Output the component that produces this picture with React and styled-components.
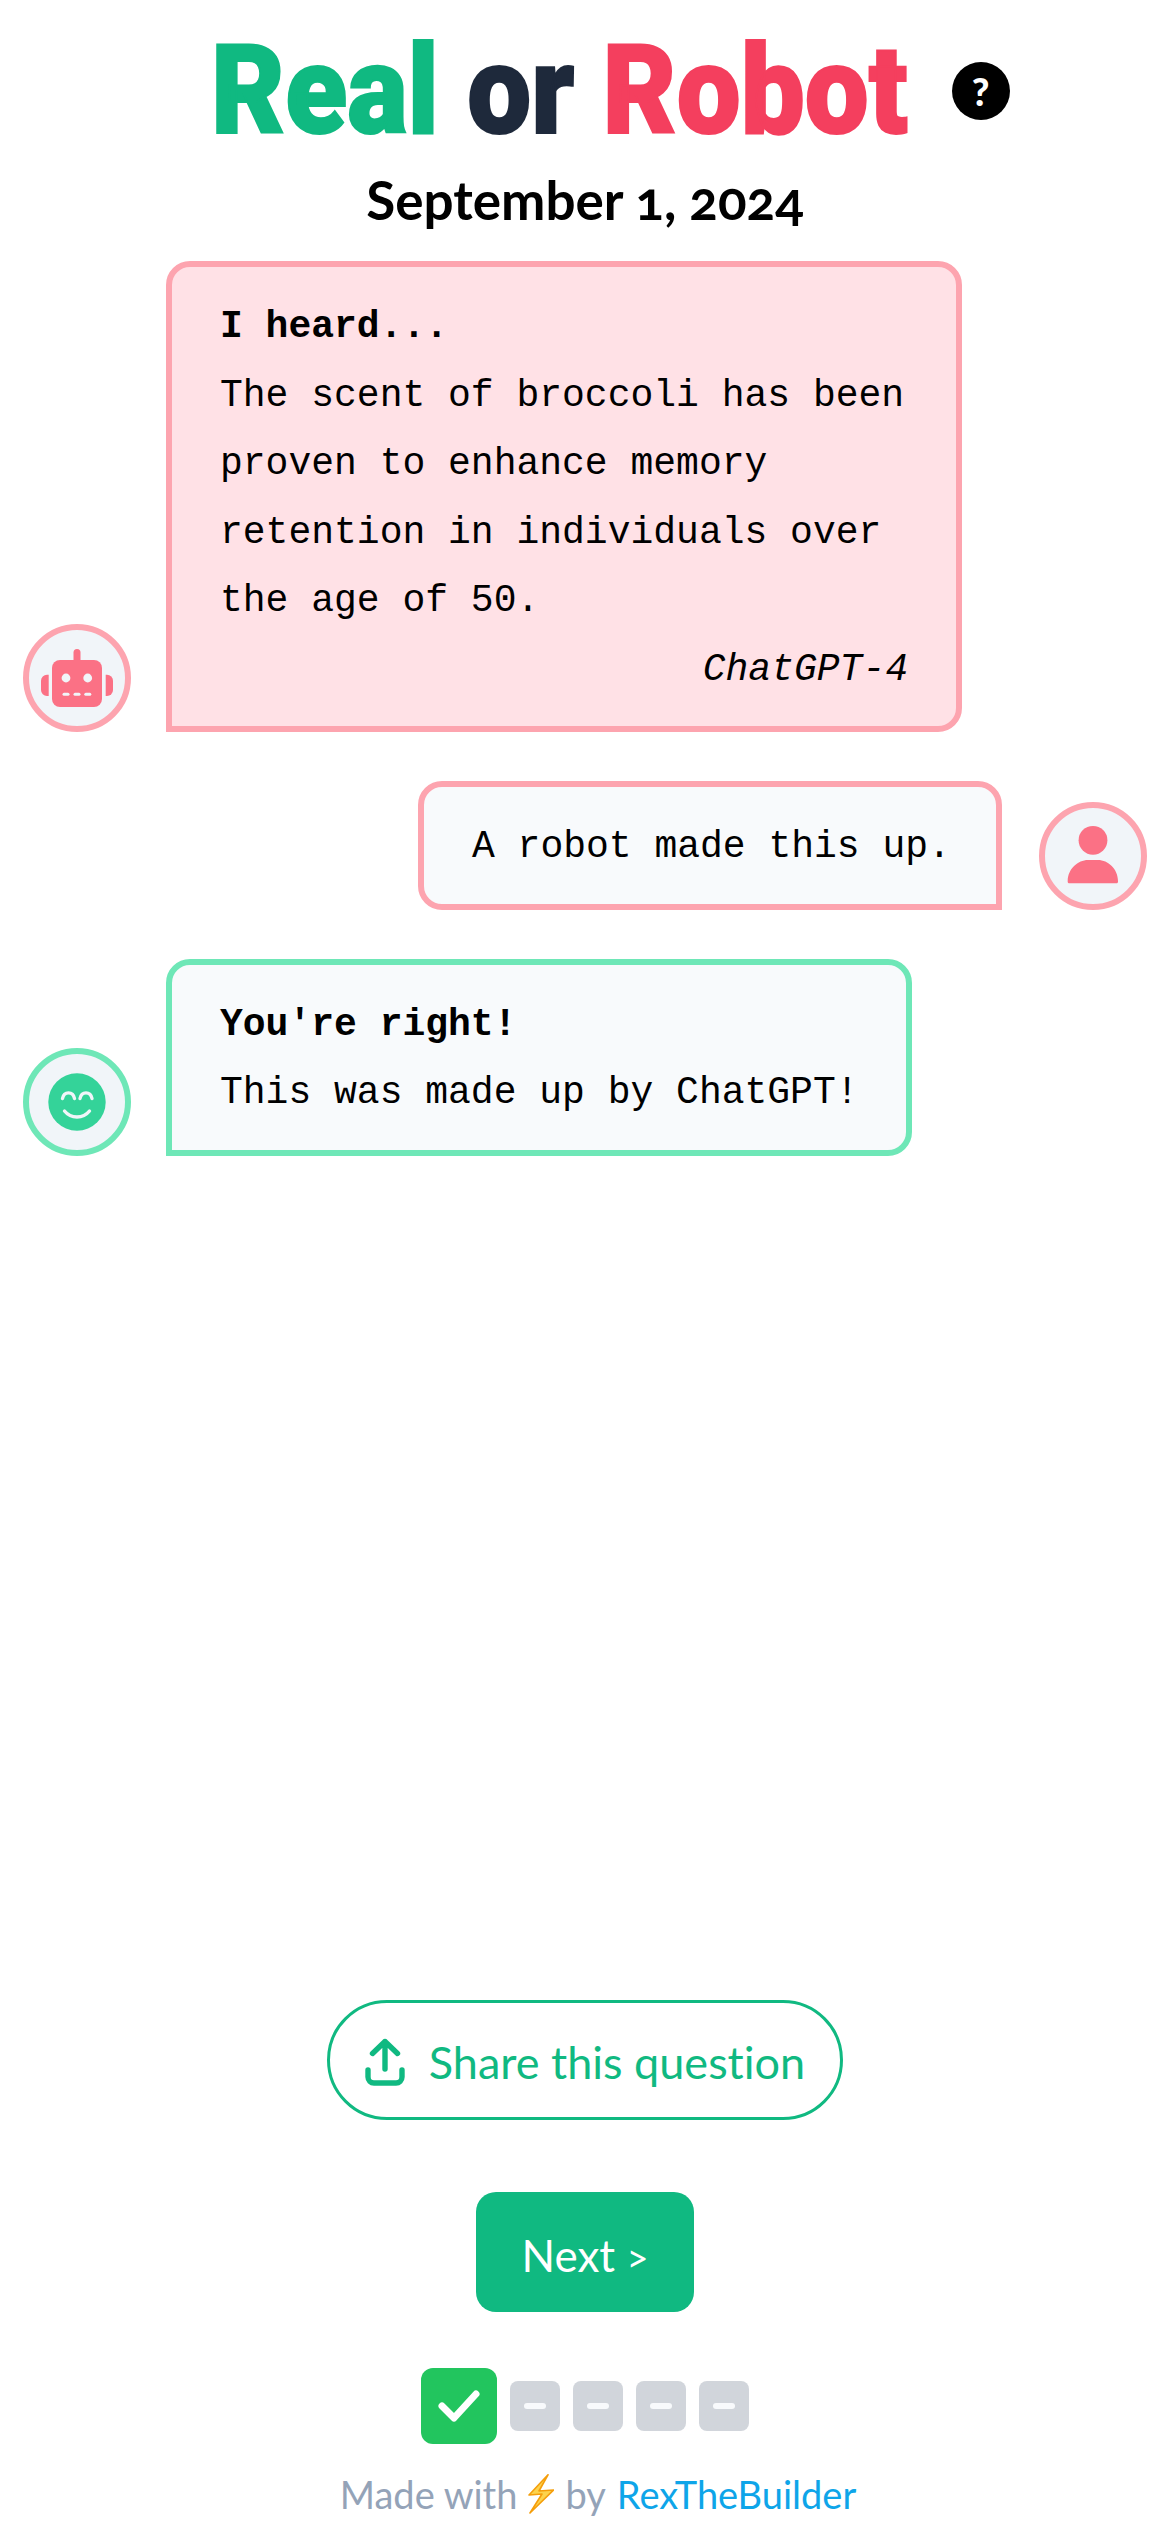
import React from 'react';
import styled, { createGlobalStyle } from 'styled-components';

const GlobalStyle = createGlobalStyle`
  html, body {
    margin: 0;
    padding: 0;
    background: #fff;
  }
  * {
    box-sizing: border-box;
  }
`;

const ROSE = { border: '#fda4af', icon: '#fb7185' };
const MINT = { border: '#6ee7b7', icon: '#34d399' };

const Page = styled.div`
  display: flex;
  flex-direction: column;
  height: 2532px;
  font-family: "Lato", "Noto Sans", sans-serif;
`;

const Header = styled.header`
  display: flex;
  flex-direction: column;
  align-items: center;
  padding-top: 26px;
`;

const TitleRow = styled.div`
  display: flex;
  align-items: center;
  gap: 48px;
  padding-left: 50px;
`;

const TitleBox = styled.div`
  width: 693px;
`;

// no condensed face is installed, so the wordmark is squeezed
const Title = styled.h1`
  display: inline-block;
  margin: 0;
  font-family: "Roboto", "Liberation Sans", sans-serif;
  font-size: 125px;
  line-height: 130px;
  font-weight: 900;
  -webkit-text-stroke: 2px currentColor;
  color: #1e293b;
  white-space: nowrap;
  transform: scaleX(0.91);
  transform-origin: left center;
`;

const TitleWord = styled.span`
  color: ${p => p.$color};
`;

const HelpBadge = styled.div`
  display: flex;
  align-items: center;
  justify-content: center;
  width: 58px;
  height: 58px;
  border-radius: 50%;
  background: #000;
  color: #fff;
  font-family: "Lato", sans-serif;
  font-weight: 900;
  font-size: 38px;
`;

const DateLine = styled.div`
  margin-top: 11px;
  font-size: 53px;
  line-height: 66px;
  font-weight: 700;
  font-variant-numeric: oldstyle-nums;
  color: #000;
`;

const Chat = styled.main`
  flex: 1;
  display: flex;
  flex-direction: column;
  gap: 49px;
  padding: 28px 23px 0;
  font-family: "Liberation Mono", monospace;
  font-size: 38px;
  line-height: 68.5px;
  color: #000;
`;

const Row = styled.div`
  display: flex;
  align-items: flex-end;
  gap: ${p => (p.$right ? 37 : 35)}px;
  justify-content: ${p => (p.$right ? 'flex-end' : 'flex-start')};
`;

const Avatar = styled.div`
  flex: none;
  width: 108px;
  height: 108px;
  border-radius: 50%;
  border: 6px solid ${p => p.$border};
  background: #f1f5f9;
  color: ${p => p.$icon};
`;

const Bubble = styled.div`
  width: ${p => p.$width}px;
  padding: 26px 48px 22px;
  border: 6px solid ${p => p.$border};
  border-radius: ${p => (p.$right ? '24px 24px 0 24px' : '24px 24px 24px 0')};
  background: ${p => p.$bg || '#f8fafc'};
  white-space: ${p => (p.$oneLine ? 'nowrap' : 'normal')};
`;

const Heading = styled.div`
  font-weight: 700;
`;

const Source = styled.div`
  text-align: right;
  font-style: italic;
`;

const Actions = styled.footer`
  display: flex;
  flex-direction: column;
  align-items: center;
  padding-bottom: 8px;
`;

const ShareButton = styled.button`
  display: flex;
  align-items: center;
  justify-content: center;
  gap: 24px;
  width: 516px;
  height: 120px;
  margin-bottom: 72px;
  padding-top: 4px;
  border: 3px solid #10b981;
  border-radius: 60px;
  background: #fff;
  color: #10b981;
  font-family: inherit;
  font-size: 45px;
  font-variant-ligatures: none;
`;

const NextButton = styled.button`
  width: 218px;
  height: 120px;
  margin-bottom: 56px;
  padding-top: 6px;
  border: none;
  border-radius: 20px;
  background: #10b981;
  color: #fff;
  font-family: inherit;
  font-size: 44px;
`;

const NextArrow = styled.span`
  font-size: 38px;
`;

const Progress = styled.div`
  display: flex;
  align-items: center;
  gap: 13px;
  margin-bottom: 20px;
`;

const Step = styled.div`
  display: flex;
  align-items: center;
  justify-content: center;
  width: ${p => (p.$done ? 76 : 50)}px;
  height: ${p => (p.$done ? 76 : 50)}px;
  border-radius: ${p => (p.$done ? 12 : 8)}px;
  background: ${p => (p.$done ? '#22c55e' : '#d1d5db')};
`;

const Dash = styled.div`
  width: 22px;
  height: 6px;
  border-radius: 3px;
  background: #f8fafc;
`;

const Credit = styled.div`
  display: flex;
  align-items: center;
  gap: 11px;
  padding-left: 26px;
  font-size: 38px;
  line-height: 60px;
  color: #94a3b8;
`;

const CreditLink = styled.a`
  color: #0ea5e9;
  text-decoration: none;
`;

const RobotIcon = () => (
  <svg width="96" height="96" viewBox="0 0 96 96" fill="currentColor">
    <rect x="44.5" y="19" width="7" height="14" rx="3.5" />
    <rect x="23" y="30" width="50" height="47" rx="8" />
    <path d="M19.7 44.7V66H18a6 6 0 0 1-6-6V50.7a6 6 0 0 1 6-6z" />
    <path d="M76.7 44.7V66h1.3a6 6 0 0 0 6-6V50.7a6 6 0 0 0-6-6z" />
    <circle cx="37" cy="48" r="4.4" fill="#f1f5f9" />
    <circle cx="58.7" cy="48" r="4.4" fill="#f1f5f9" />
    <g fill="#f1f5f9">
      <rect x="33.5" y="62.8" width="7" height="3" rx="1.5" />
      <rect x="44.5" y="62.8" width="7" height="3" rx="1.5" />
      <rect x="55.3" y="62.8" width="7" height="3" rx="1.5" />
    </g>
  </svg>
);

const PersonIcon = () => (
  <svg width="96" height="96" viewBox="0 0 96 96" fill="currentColor">
    <circle cx="48" cy="32.3" r="14.4" />
    <path d="M22.7 73C22.7 61 33 52 43 52h10c10 0 20 9 20 21a2 2 0 0 1-2 2.3H24.7a2 2 0 0 1-2-2.3z" />
  </svg>
);

const SmileIcon = () => (
  <svg width="96" height="96" viewBox="0 0 96 96">
    <circle cx="48" cy="48" r="28.7" fill="currentColor" />
    <g fill="none" stroke="#f1f5f9" strokeWidth="3.4" strokeLinecap="round">
      <path d="M33.5 44.5c1.5-7.5 10.5-7.5 12 0" />
      <path d="M51 44.5c1.5-7.5 10.5-7.5 12 0" />
      <path d="M35.5 57c6.5 8 18.5 8 25 0" />
    </g>
  </svg>
);

const ShareIcon = () => (
  <svg width="40" height="48" viewBox="0 0 40 48" fill="none" stroke="currentColor" strokeWidth="5.4" strokeLinecap="round" strokeLinejoin="round">
    <path d="M20 31V3.5M7.5 15.5L20 3.5l12.5 12" />
    <path d="M3 32v7a6 6 0 0 0 6 6h22a6 6 0 0 0 6-6v-7" />
  </svg>
);

const CheckIcon = () => (
  <svg width="42" height="32" viewBox="0 0 42 32" fill="none" stroke="#fff" strokeWidth="7" strokeLinecap="round" strokeLinejoin="round">
    <path d="M4 16l12 12L38 4" />
  </svg>
);

const BoltIcon = () => (
  <svg width="26" height="40" viewBox="0 0 26 40">
    <path d="M20 0.8L1 21l13-1L2 39l23.5-23-14.5 1z" fill="#fcd34d" stroke="#f59e0b" strokeWidth="1.6" strokeLinejoin="round" />
  </svg>
);

export default function App() {
  return (
    <Page>
      <GlobalStyle />
      <Header>
        <TitleRow>
          <TitleBox>
            <Title>
              <TitleWord $color="#10b981">Real</TitleWord> or <TitleWord $color="#f43f5e">Robot</TitleWord>
            </Title>
          </TitleBox>
          <HelpBadge>?</HelpBadge>
        </TitleRow>
        <DateLine>September 1, 2024</DateLine>
      </Header>
      <Chat>
        <Row>
          <Avatar $border={ROSE.border} $icon={ROSE.icon}><RobotIcon /></Avatar>
          <Bubble $width={796} $border={ROSE.border} $bg="#ffe1e6">
            <Heading>I heard...</Heading>
            The scent of broccoli has been proven to enhance memory retention in individuals over the age of 50.
            <Source>ChatGPT-4</Source>
          </Bubble>
        </Row>
        <Row $right>
          <Bubble $right $oneLine $width={584} $border={ROSE.border}>A robot made this up.</Bubble>
          <Avatar $border={ROSE.border} $icon={ROSE.icon}><PersonIcon /></Avatar>
        </Row>
        <Row>
          <Avatar $border={MINT.border} $icon={MINT.icon}><SmileIcon /></Avatar>
          <Bubble $oneLine $width={746} $border={MINT.border}>
            <Heading>You're right!</Heading>
            This was made up by ChatGPT!
          </Bubble>
        </Row>
      </Chat>
      <Actions>
        <ShareButton><ShareIcon />Share this question</ShareButton>
        <NextButton>Next <NextArrow>&gt;</NextArrow></NextButton>
        <Progress>
          <Step $done><CheckIcon /></Step>
          <Step><Dash /></Step>
          <Step><Dash /></Step>
          <Step><Dash /></Step>
          <Step><Dash /></Step>
        </Progress>
        <Credit>
          Made with <BoltIcon /> by <CreditLink href="#">RexTheBuilder</CreditLink>
        </Credit>
      </Actions>
    </Page>
  );
}
